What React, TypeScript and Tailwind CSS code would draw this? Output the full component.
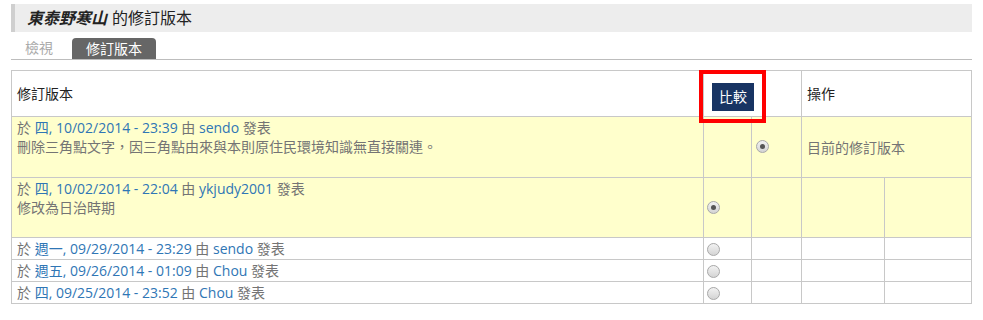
const font = { fontFamily: '"Open Sans", "Noto Sans CJK TC", sans-serif' };

function Radio({ checked }: { checked?: boolean }) {
  return (
    <span className="inline-block w-[13px] h-[13px] rounded-full border border-[#a9a9a9] bg-gradient-to-b from-[#f2f2f2] to-[#d4d4d4] relative align-middle">
      {checked && <span className="absolute left-[3px] top-[3px] w-[5px] h-[5px] rounded-full bg-[#555]" />}
    </span>
  );
}

function Meta({ day, date, user }: { day: string; date: string; user: string }) {
  return (
    <div>
      於 <a className="text-[#2f76b5]">{day}, {date}</a> 由 <a className="text-[#2f76b5]">{user}</a> 發表
    </div>
  );
}

const cell = 'border border-[#c8c8c8] p-0';

export default function App() {
  return (
    <div className="bg-white w-[983px] h-[320px] pt-[4px] px-[11px] text-[14px] text-[#747474]" style={font}>
      <div className="h-[28px] bg-[#ededed] border-l-[4px] border-[#cfcfcf] flex items-center pl-[12px] text-[16px] text-[#222]">
        <em className="font-semibold">東泰野寒山</em>
        <span className="ml-[5px]">的修訂版本</span>
      </div>
      <div className="mt-[6px] h-[22px] border-b border-[#bdbdbd] flex items-end">
        <span className="ml-[14px] w-[47px] h-[21px] leading-[20px] text-[#aaa]">檢視</span>
        <span className="w-[84px] h-[21px] leading-[21px] bg-[#666] text-white rounded-t-[4px] text-center">修訂版本</span>
      </div>
      <table className="mt-[10px] w-[960px] border-collapse table-fixed">
        <colgroup>
          <col className="w-[692px]" />
          <col className="w-[48px]" />
          <col className="w-[50px]" />
          <col className="w-[83px]" />
          <col className="w-[87px]" />
        </colgroup>
        <tbody>
          <tr className="h-[46px] text-[#222]">
            <td className={`${cell} px-[5px]`}>修訂版本</td>
            <td className={`${cell} relative`} colSpan={2}>
              <div className="absolute left-[-5px] top-[-1px] w-[67px] h-[53px] border-[4px] border-[#ff0000] z-10" />
              <button className="ml-[8px] mt-[6px] w-[42px] h-[28px] bg-[#183463] text-white text-[14px]">比較</button>
            </td>
            <td className={`${cell} px-[5px]`} colSpan={2}>操作</td>
          </tr>
          <tr className="h-[61px] bg-[#ffffcc] leading-[19px]">
            <td className={`${cell} px-[5px] pt-[1px] pb-[19px] align-top`}>
              <Meta day="四" date="10/02/2014 - 23:39" user="sendo" />
              <div>刪除三角點文字，因三角點由來與本則原住民環境知識無直接關連。</div>
            </td>
            <td className={cell} />
            <td className={`${cell} pl-[4px] pb-[4px]`}><Radio checked /></td>
            <td className={`${cell} px-[5px]`} colSpan={2}>目前的修訂版本</td>
          </tr>
          <tr className="h-[60px] bg-[#ffffcc] leading-[19px]">
            <td className={`${cell} px-[5px] pt-[1px] pb-[19px] align-top`}>
              <Meta day="四" date="10/02/2014 - 22:04" user="ykjudy2001" />
              <div>修改為日治時期</div>
            </td>
            <td className={`${cell} pl-[3px] pb-[4px]`}><Radio checked /></td>
            <td className={cell} />
            <td className={cell} />
            <td className={cell} />
          </tr>
          {[
            ['週一', '09/29/2014 - 23:29', 'sendo'],
            ['週五', '09/26/2014 - 01:09', 'Chou'],
            ['四', '09/25/2014 - 23:52', 'Chou'],
          ].map(([d, t, u]) => (
            <tr key={t} className="h-[22px] leading-[19px]">
              <td className={`${cell} px-[5px]`}><Meta day={d} date={t} user={u} /></td>
              <td className={`${cell} pl-[3px] pb-[2px]`}><Radio /></td>
              <td className={cell} />
              <td className={cell} />
              <td className={cell} />
            </tr>
          ))}
        </tbody>
      </table>
    </div>
  );
}
